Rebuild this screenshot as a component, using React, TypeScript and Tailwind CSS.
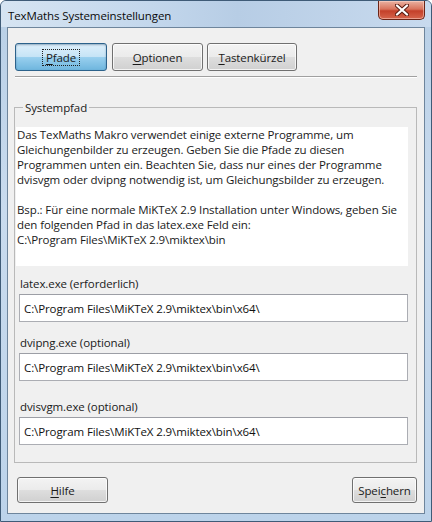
import type { ReactNode } from 'react'

const ui = "font-['Open_Sans','Noto_Sans',sans-serif] text-[11.5px] leading-[15px] tracking-[-0.1px] text-[#1a1a1a]"

function WinButton({
  children,
  pressed = false,
  className = ''
}: {
  children: ReactNode
  pressed?: boolean
  className?: string
}) {
  return (
    <div
      className={`flex items-center justify-center rounded-[3px] border ${
        pressed
          ? 'border-[#2c628b] bg-[linear-gradient(to_bottom,#dff0fb_0%,#c6e4f6_48%,#98cfee_52%,#6fb6de_100%)] shadow-[inset_0_1px_2px_rgba(0,40,80,0.35)]'
          : 'border-[#707070] bg-[linear-gradient(to_bottom,#f3f3f3_0%,#ebebeb_50%,#dedede_50%,#d0d0d0_100%)] shadow-[inset_0_0_0_1px_rgba(255,255,255,0.75)]'
      } ${className}`}
    >
      {children}
    </div>
  )
}

function PathField({ label, value, className }: { label: string; value: string; className: string }) {
  return (
    <div className={className}>
      <div className="ml-[5px] whitespace-nowrap">{label}</div>
      <input
        readOnly
        value={value}
        className="ml-[4px] mt-[3px] h-[28px] w-[389px] border border-[#abadb3] border-t-[#9c9ea5] bg-white pl-[4px] text-[11.5px] text-[#111] outline-none"
      />
    </div>
  )
}

export default function App() {
  const path = 'C:\\Program Files\\MiKTeX 2.9\\miktex\\bin\\x64\\'

  return (
    <div className={`${ui} flex h-[522px] w-[432px] flex-col overflow-hidden rounded-t-[6px] border border-[#3f5b77] bg-[linear-gradient(to_bottom,#b8cfe6_0%,#c9dbee_40%,#bcd3ea_100%)]`}>
      {/* title bar */}
      <div className="flex h-[26px] items-start justify-between bg-[linear-gradient(to_right,#d6e4f2_0%,#c3d7ec_35%,#b7cde5_55%,#c8daee_100%)]">
        <div className="pl-[7px] pt-[7px] text-[#0a0a0a]">TexMaths Systemeinstellungen</div>
        <div className="mr-[6px] flex h-[19px] w-[47px] items-center justify-center rounded-b-[5px] border border-t-0 border-[#6b2416] bg-[linear-gradient(to_bottom,#eab2a2_0%,#d9735c_45%,#c4402a_55%,#d6654c_100%)] shadow-[inset_0_0_0_1px_rgba(255,220,210,0.5)]">
          <svg width="14" height="12" viewBox="0 0 14 12">
            <path d="M2 1.5 L12 10.5 M12 1.5 L2 10.5" stroke="#5a1c12" strokeWidth="4.2" strokeLinecap="round" />
            <path d="M2 1.5 L12 10.5 M12 1.5 L2 10.5" stroke="#ffffff" strokeWidth="2.3" strokeLinecap="round" />
          </svg>
        </div>
      </div>

      {/* client area */}
      <div className="mx-[6px] h-[487px] border border-[#6e859c] bg-[#f0f0f0] px-[7px]">
        <div className="flex gap-[4px] pt-[15px]">
          <WinButton pressed className="h-[28px] w-[92px]">
            <span className="border border-dotted border-[#222] px-[3px] leading-[15px]">
              <u className="underline-offset-2">P</u>fade
            </span>
          </WinButton>
          <WinButton className="ml-[1px] h-[28px] w-[91px]">
            <span><u className="underline-offset-2">O</u>ptionen</span>
          </WinButton>
          <WinButton className="h-[28px] w-[90px]">
            <span><u className="underline-offset-2">T</u>astenkürzel</span>
          </WinButton>
        </div>

        <div className="mt-[5px] h-[2px] border-t border-b border-t-[#a0a0a0] border-b-white" />

        <fieldset className="-ml-[1px] mt-[22px] w-[403px] border border-[#b9b9b9] pb-[17px]">
          <legend className="ml-[8px] px-[2px] leading-[15px]">Systempfad</legend>

          <div className="ml-[1px] mt-[12px] h-[139px] w-[392px] bg-white pl-[1px] whitespace-nowrap">
            <div>Das TexMaths Makro verwendet einige externe Programme, um</div>
            <div>Gleichungenbilder zu erzeugen. Geben Sie die Pfade zu diesen</div>
            <div>Programmen unten ein. Beachten Sie, dass nur eines der Programme</div>
            <div>dvisvgm oder dvipng notwendig ist, um Gleichungsbilder zu erzeugen.</div>
            <div className="mt-[15px]">Bsp.: Für eine normale MiKTeX 2.9 Installation unter Windows, geben Sie</div>
            <div>den folgenden Pfad in das latex.exe Feld ein:</div>
            <div>C:\Program Files\MiKTeX 2.9\miktex\bin</div>
          </div>

          <PathField className="mt-[10px]" label="latex.exe (erforderlich)" value={path} />
          <PathField className="mt-[13px]" label="dvipng.exe (optional)" value={path} />
          <PathField className="mt-[18px]" label="dvisvgm.exe (optional)" value={path} />
        </fieldset>

        <div className="mt-[14px] flex justify-between pl-[2px]">
          <WinButton className="h-[26px] w-[91px]">
            <span><u className="underline-offset-2">H</u>ilfe</span>
          </WinButton>
          <WinButton className="h-[26px] w-[65px]">
            <span>Spei<u className="underline-offset-2">c</u>hern</span>
          </WinButton>
        </div>
      </div>
    </div>
  )
}
